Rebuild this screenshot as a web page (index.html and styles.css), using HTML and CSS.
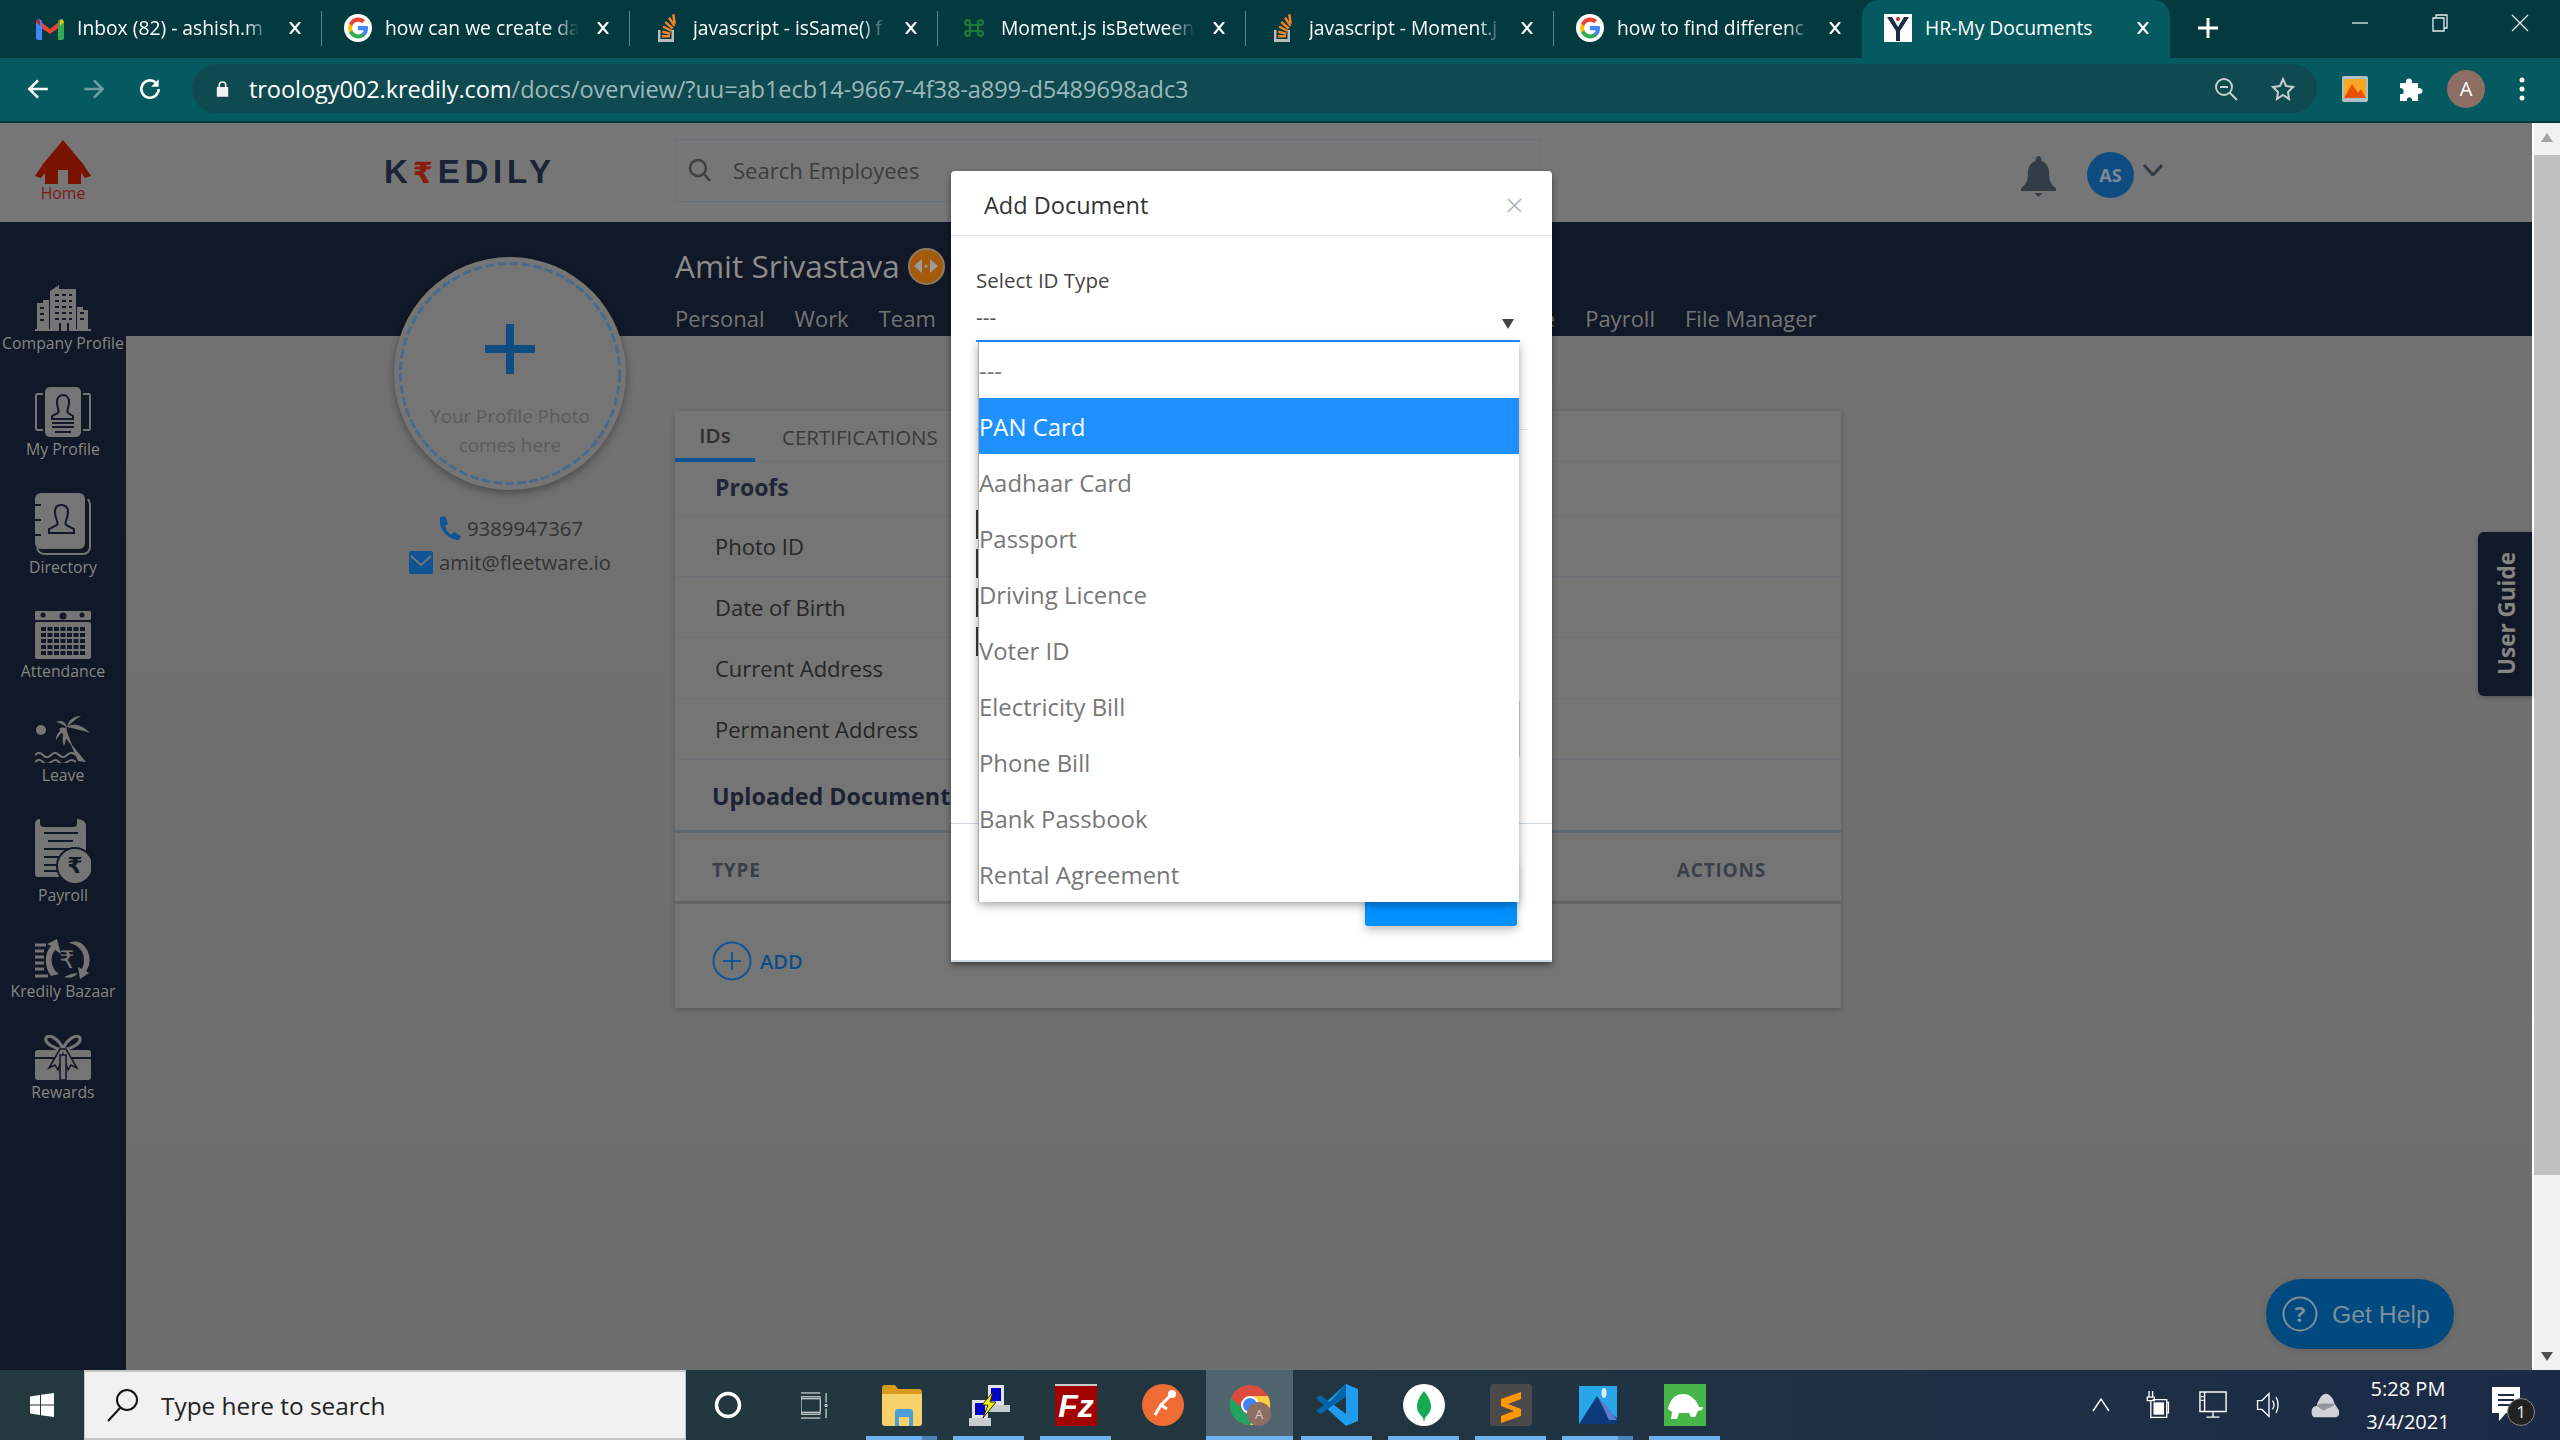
FILE: index.html
```html
<!DOCTYPE html>
<html lang="en">
<head>
<meta charset="utf-8">
<title>HR-My Documents</title>
<link rel="stylesheet" href="styles.css">
</head>
<body>
<header class="tabstrip">
  <div class="tab">
    <svg class="favicon" viewBox="0 0 28 28"><g transform="translate(0 4)"><path fill="#ea4335" d="M4 3 14 11 24 3 24 9 14 16 4 9Z"/><path fill="#4285f4" d="M0 5C0 1 3 0 5 2L6 3V22H2C1 22 0 21 0 20Z"/><path fill="#34a853" d="M28 5C28 1 25 0 23 2L22 3V22H26C27 22 28 21 28 20Z"/><path fill="#fbbc04" d="M24 3 26 1 28 4 24 8Z"/><path fill="#c5221f" d="M4 3 2 1 0 4 4 8Z"/></g></svg>
    <span class="tab-title">Inbox (82) - ashish.m</span><svg class="tab-x" viewBox="0 0 12 12"><path d="M1 0 11 12M11 0 1 12"/></svg>
  </div>
  <div class="tab">
    <svg class="favicon" viewBox="0 0 28 28"><use href="#google"/></svg>
    <span class="tab-title">how can we create da</span><svg class="tab-x" viewBox="0 0 12 12"><path d="M1 0 11 12M11 0 1 12"/></svg>
  </div>
  <div class="tab">
    <svg class="favicon" viewBox="0 0 28 28"><use href="#stack"/></svg>
    <span class="tab-title">javascript - isSame() f</span><svg class="tab-x" viewBox="0 0 12 12"><path d="M1 0 11 12M11 0 1 12"/></svg>
  </div>
  <div class="tab">
    <svg class="favicon" viewBox="0 0 28 28"><path fill="none" stroke="#1f7a35" stroke-width="2.200" d="M10 11H18V17H10ZM10 11H7A2.500 2.500 0 1 1 10 8ZM18 11H21A2.500 2.500 0 1 0 18 8ZM10 17H7A2.500 2.500 0 1 0 10 20ZM18 17H21A2.500 2.500 0 1 1 18 20Z"/></svg>
    <span class="tab-title">Moment.js isBetween</span><svg class="tab-x" viewBox="0 0 12 12"><path d="M1 0 11 12M11 0 1 12"/></svg>
  </div>
  <div class="tab">
    <svg class="favicon" viewBox="0 0 28 28"><use href="#stack"/></svg>
    <span class="tab-title">javascript - Moment.j</span><svg class="tab-x" viewBox="0 0 12 12"><path d="M1 0 11 12M11 0 1 12"/></svg>
  </div>
  <div class="tab tab-last">
    <svg class="favicon" viewBox="0 0 28 28"><use href="#google"/></svg>
    <span class="tab-title">how to find differenc</span><svg class="tab-x" viewBox="0 0 12 12"><path d="M1 0 11 12M11 0 1 12"/></svg>
  </div>
  <div class="tab tab-active">
    <svg class="favicon" viewBox="0 0 28 28"><rect width="28" height="28" fill="#fff"/><path fill="#1d2a44" d="M3 3H8L14 13L20 3H25L16 17V27H12V17Z"/><circle cx="14" cy="5" r="2" fill="#c62828"/></svg>
    <span class="tab-title tab-title-full">HR-My Documents</span><svg class="tab-x" viewBox="0 0 12 12"><path d="M1 0 11 12M11 0 1 12"/></svg>
  </div>
  <svg class="new-tab" viewBox="0 0 20 20"><path d="M10 0V20M0 10H20"/></svg>
  <div class="win-controls">
    <svg viewBox="0 0 20 20"><path d="M2 10H18"/></svg>
    <svg viewBox="0 0 20 20"><path d="M3 5H14V18H3ZM6 5V2H17V15H14"/></svg>
    <svg viewBox="0 0 20 20"><path d="M2 2 18 18M18 2 2 18"/></svg>
  </div>
</header>

<div class="toolbar">
  <svg class="tb-icon" viewBox="0 0 24 24"><path d="M21 12H4M12 4 4 12 12 20"/></svg>
  <svg class="tb-icon tb-dim" viewBox="0 0 24 24"><path d="M3 12H20M12 4 20 12 12 20"/></svg>
  <svg class="tb-icon" viewBox="0 0 24 24"><path d="M20 12A8 8 0 1 1 17.5 6.200"/><path class="solid" d="M20 3V10H13Z"/></svg>
  <div class="omnibox">
    <svg class="lock" viewBox="0 0 16 20"><path d="M3 8V6A5 5 0 0 1 13 6V8H15V20H1V8ZM5 8H11V6A3 3 0 0 0 5 6Z"/></svg>
    <span class="url"><span class="url-host">troology002.kredily.com</span>/docs/overview/?uu=ab1ecb14-9667-4f38-a899-d5489698adc3</span>
    <svg class="omni-icon" viewBox="0 0 24 24"><circle cx="10" cy="10" r="8"/><path d="M16 16 23 23M6 10H14"/></svg>
    <svg class="omni-icon" viewBox="0 0 24 24"><path d="M12 2 15 9 22 10 17 15 18 22 12 18 6 22 7 15 2 10 9 9Z"/></svg>
  </div>
  <div class="tb-right">
    <svg class="ext-photo" viewBox="0 0 26 26"><rect width="26" height="26" rx="2" fill="#b0bec5"/><rect x="2" y="3" width="22" height="19" fill="#f9a825"/><path fill="#e65100" d="M2 22 10 8 16 17 19 13 24 22Z"/></svg>
    <svg class="ext-puzzle" viewBox="0 0 26 26"><path d="M3 7H9C8 1 16 1 15 7H21V12C27 11 27 19 21 18V25H15C16 20 9 20 10 25H3V18C8 19 8 12 3 12Z"/></svg>
    <span class="tb-avatar">A</span>
    <svg class="tb-dots" viewBox="0 0 6 24"><circle cx="3" cy="3" r="2.500"/><circle cx="3" cy="12" r="2.500"/><circle cx="3" cy="21" r="2.500"/></svg>
  </div>
</div>

<div class="viewport">
  <div class="page">
    <div class="app-header">
      <div class="home">
        <svg class="home-icon" viewBox="0 0 56 44"><path d="M28 0 48 24 56 36 50 38 46 33V44H33V30H23V44H10V33L6 38 0 36 8 24Z"/></svg>
        <span>Home</span>
      </div>
      <div class="logo">K<span class="logo-r">₹</span>EDILY</div>
      <div class="search">
        <svg viewBox="0 0 24 24"><circle cx="10" cy="10" r="8"/><path d="M16 16 22 23"/></svg>
        <span>Search Employees</span>
      </div>
      <svg class="bell" viewBox="0 0 36 42"><path d="M18 0C20 0 21 2 21 5C27 7 29 12 29 19C29 27 32 30 36 33V36H0V33C4 30 7 27 7 19C7 12 9 7 15 5C15 2 16 0 18 0Z"/><path d="M14 38H22L18 42Z"/></svg>
      <span class="avatar">AS</span>
      <svg class="chev" viewBox="0 0 20 12"><path d="M1 1 10 11 19 1"/></svg>
    </div>
    <div class="page-body">
      <nav class="sidebar">
        <a class="side-item">
          <svg width="56" height="46" viewBox="0 0 56 46"><path d="M0 46V44H2V18H8V15H14V44H15V6L24 0V4H41V44H42V22H48V25H53V44H56V46Z"/><path class="cut" stroke-dasharray="4 3" d="M20 10H37M20 16H37M20 22H37M20 28H37M20 34H37M5 23H10M5 29H10M5 35H10M45 28H50M45 34H50"/><path class="cut" d="M25 38V46M33 38V46"/></svg>
          <span>Company Profile</span>
        </a>
        <a class="side-item">
          <svg width="56" height="50" viewBox="0 0 56 50"><path fill="none" stroke="#757575" stroke-width="2" d="M8 7H2C1 7 1 8 1 9V41C1 42 1 43 2 43H8M48 7H54C55 7 55 8 55 9V41C55 42 55 43 54 43H48"/><rect x="10" y="0" width="36" height="50" rx="5"/><path class="cut thin" d="M23 26C25 24 22 21 22 15C22 10 25 8 28 8C31 8 34 10 34 15C34 21 31 24 33 26L38 29V32H17V29Z"/><path class="cut" d="M17 36H39M17 40H39M20 45H36"/></svg>
          <span>My Profile</span>
        </a>
        <a class="side-item">
          <svg width="56" height="62" viewBox="0 0 56 62"><path fill="none" stroke="#757575" stroke-width="2" d="M53 6C54 8 55 9 55 12V54C55 58 52 61 48 61H10C6 61 3 59 2 55"/><rect x="0" y="0" width="50" height="56" rx="6"/><path class="cut" stroke-width="3" d="M0 12H6M0 27H6M0 42H6"/><path class="cut thin" d="M22 32C24 29 20 26 20 19C20 13 23 12 26 12C29 12 33 13 33 19C33 26 29 29 31 32L39 36V40H14V36Z"/></svg>
          <span>Directory</span>
        </a>
        <a class="side-item">
          <svg width="56" height="48" viewBox="0 0 56 48"><rect y="0" width="56" height="9" rx="1"/><rect y="11" width="56" height="37" rx="2"/><circle class="dark" cx="8" cy="4" r="2.500"/><circle class="dark" cx="28" cy="5" r="3.500"/><circle class="dark" cx="47" cy="4" r="2.500"/><path class="cut cut-cal" stroke-dasharray="5 1.500" d="M6 18H50M6 24H50M6 30H50M6 36H50M6 42H50"/></svg>
          <span>Attendance</span>
        </a>
        <a class="side-item">
          <svg width="56" height="48" viewBox="0 0 56 48"><circle cx="6" cy="15" r="5"/><path d="M26 14C28 12 31 12 33 14L39 30 53 47 45 46 38 30Z" transform="translate(-2 0)"/><path d="M32 12C30 6 26 5 21 7C26 8 28 10 32 12ZM32 12C34 5 38 1 46 1C40 4 37 8 32 12ZM32 12C38 8 46 9 55 18C47 15 40 14 32 12ZM32 12C26 14 21 18 21 25C24 20 28 16 32 12ZM32 12C31 18 32 24 29 31C27 25 27 18 32 12Z"/><path fill="none" stroke="#757575" stroke-width="2" d="M0 40C3 37 5 37 8 40S13 43 16 40 21 37 24 40 29 43 32 40 37 37 41 40M0 47C3 44 5 44 8 47S13 49 16 47 21 44 24 47 29 49 32 47 37 44 41 47"/></svg>
          <span>Leave</span>
        </a>
        <a class="side-item">
          <svg width="56" height="64" viewBox="0 0 56 64"><path d="M0 6C0 2 2 0 5 0V4C5 7 7 8 10 8H38C41 8 42 7 42 4V0C45 0 51 2 51 6V58H3C1 58 0 57 0 55Z"/><path class="cut" d="M9 14H43M13 22H38M9 30H40M9 38H30M9 46H30M9 52H26"/><circle cx="40" cy="47" r="18" stroke="#111827" stroke-width="2"/><text class="rupee" x="40" y="54" text-anchor="middle" font-size="22">₹</text></svg>
          <span>Payroll</span>
        </a>
        <a class="side-item">
          <svg width="56" height="40" viewBox="0 0 56 40"><path class="side-stroke" stroke-width="3" d="M0 6H11M0 12H9M0 18H9M0 24H9M0 30H9M0 37H13"/><path d="M22 0 26 15 20 11C14 18 16 30 24 35L16 37C9 28 9 14 16 7L12 5Z"/><path d="M36 35 29 38C34 40 40 38 43 34ZM34 4C40 1 47 3 50 8C56 15 56 26 51 32L54 34 45 40 43 28 47 30C50 24 50 14 44 9C41 6 38 5 34 4Z"/><text class="rupee light" x="32" y="29" text-anchor="middle" font-size="24">₹</text></svg>
          <span>Kredily Bazaar</span>
        </a>
        <a class="side-item">
          <svg width="56" height="45" viewBox="0 0 56 45"><path d="M0 17C0 16 1 15 3 15H53C55 15 56 16 56 17V22H0ZM0 24H56V42C56 44 55 45 53 45H3C1 45 0 44 0 42Z"/><path fill="none" stroke="#757575" stroke-width="3" d="M28 14C24 4 14 -2 11 3C9 8 20 14 28 15C36 14 47 8 45 3C42 -2 32 4 28 14Z"/><path stroke="#111827" stroke-width="1.500" d="M25 14 14 33 20 30 23 35 28 19 33 35 36 30 42 33 31 14Z"/><path stroke="#111827" stroke-width="1.500" d="M25 20H31V45H25Z"/></svg>
          <span>Rewards</span>
        </a>
      </nav>
      <main class="main">
        <div class="band">
          <div class="name-row">
            <h1>Amit Srivastava</h1>
            <span class="badge"><svg viewBox="0 0 24 14"><path d="M0 7 8 0V14ZM24 7 16 0V14Z"/><circle cx="12" cy="7" r="1.500"/></svg></span>
          </div>
          <div class="band-nav">
            <a>Personal</a><a>Work</a><a>Team</a><a class="nav-leave">Leave</a><a>Payroll</a><a>File Manager</a>
          </div>
        </div>
        <div class="content">
          <aside class="profile">
            <div class="photo">
              <svg class="photo-dash" viewBox="0 0 222 223"><ellipse cx="111" cy="111.500" rx="109.500" ry="110"/></svg>
              <div class="photo-ring">
                <svg class="plus" viewBox="0 0 50 50"><path d="M21 0H29V21H50V29H29V50H21V29H0V21H21Z"/></svg>
                <p>Your Profile Photo<br>comes here</p>
              </div>
            </div>
            <div class="contact contact-first">
              <svg width="24" height="24" viewBox="0 0 24 24"><path class="blue" d="M3 1 8 0 11 8 8 10C9 14 11 17 14 19L17 16 24 20 22 24C12 24 1 14 3 1Z"/></svg>
              <span>9389947367</span>
            </div>
            <div class="contact">
              <svg width="24" height="24" viewBox="0 0 24 24"><rect class="blue" y="1" width="24" height="23" rx="2"/><path fill="none" stroke="#757575" stroke-width="2" d="M2 6 12 15 22 6"/></svg>
              <span>amit@fleetware.io</span>
            </div>
          </aside>
          <section class="card">
            <div class="card-tabs">
              <a class="card-tab card-tab-on">IDs</a><a class="card-tab">CERTIFICATIONS</a>
            </div>
            <div class="row row-head">Proofs</div>
            <div class="row">Photo ID</div>
            <div class="row">Date of Birth</div>
            <div class="row">Current Address</div>
            <div class="row">Permanent Address</div>
            <div class="row-upload">Uploaded Documents</div>
            <div class="table-head"><span>TYPE</span><span>ACTIONS</span></div>
            <div class="add-row">
              <svg viewBox="0 0 40 40"><circle cx="20" cy="20" r="18.500"/><path d="M20 11V29M11 20H29"/></svg>
              <span>ADD</span>
            </div>
          </section>
        </div>
      </main>
    </div>
  </div>
  <div class="scrollbar">
    <span class="arrow-up"></span>
    <div class="thumb"></div>
    <span class="arrow-down"></span>
  </div>
</div>

<footer class="taskbar">
  <div class="start"><svg viewBox="0 0 24 24"><path d="M0 3.500 10 2V11.500H0ZM11 1.800 24 0V11.500H11ZM0 12.500H10V22L0 20.500ZM11 12.500H24V24L11 22.200Z"/></svg></div>
  <div class="task-search">
    <svg viewBox="0 0 32 34"><circle cx="20" cy="12" r="10"/><path d="M13 20 1 33"/></svg>
    <span>Type here to search</span>
  </div>
  <div class="task-slot slot-cortana"><svg class="i-cortana" viewBox="0 0 28 28"><circle cx="14" cy="14" r="11.500"/></svg></div>
  <div class="task-slot slot-view"><svg class="i-view" viewBox="0 0 28 28"><path d="M0 1H20M0 27H20M0 6V5H20V6M0 7H20V21H0ZM0 22V23H20V22M26 1V11M26 17V27M25 13H27V15H25Z"/></svg></div>
  <div class="task-slot on split">
    <svg viewBox="0 0 42 42"><path fill="#d99a1d" d="M1 4C1 2 2 1 4 1H14L17 5H38C40 5 41 6 41 8V40H1Z"/><path fill="#f7d26b" d="M1 10H41V39C41 41 40 42 38 42H4C2 42 1 41 1 39Z"/><path fill="#4a9fd8" d="M14 28C14 26 15 25 17 25H29C31 25 32 26 32 28V42H28V33H18V42H14Z"/></svg>
  </div>
  <div class="task-slot on">
    <svg viewBox="0 0 42 42"><rect x="20" y="1" width="16" height="20" fill="#dfe3e6"/><rect x="23" y="4" width="10" height="13" fill="#0000c8"/><rect x="20" y="21" width="22" height="7" fill="#c7ccd0"/><rect x="4" y="16" width="16" height="19" fill="#dfe3e6"/><rect x="7" y="19" width="10" height="12" fill="#0000c8"/><rect x="1" y="34" width="22" height="8" fill="#c7ccd0"/><path fill="#f5f200" stroke="#222" d="M25 8 14 21 20 21 15 34 28 18 22 18Z"/></svg>
  </div>
  <div class="task-slot on">
    <svg viewBox="0 0 42 42"><rect width="42" height="42" fill="#a30000"/><path fill="#c9c9c9" d="M0 0H42V2H0Z"/><text class="fz" x="21" y="33" text-anchor="middle">Fz</text></svg>
  </div>
  <div class="task-slot">
    <svg viewBox="0 0 42 42"><circle cx="21" cy="21" r="21" fill="#ef6c35"/><path fill="none" stroke="#fff" stroke-width="3" d="M31 9 19 21 13 31M19 21 25 25"/><circle cx="30" cy="10" r="4" fill="#fff"/></svg>
  </div>
  <div class="task-slot active on">
    <svg viewBox="0 0 42 42"><circle cx="21" cy="21" r="20" fill="#dd4b3e"/><path fill="#1ea362" d="M2 14A20 20 0 0 0 21 41L30 25 21 30C16 30 13 27 12 23Z"/><path fill="#ffce44" d="M21 12H39A20 20 0 0 1 21 41L30 25C31 20 27 13 21 12Z"/><circle cx="21" cy="21" r="9" fill="#fff"/><circle cx="21" cy="21" r="7" fill="#4285f4"/><circle cx="30" cy="30" r="12" fill="#8d6e63"/><text class="chrome-a" x="30" y="35" text-anchor="middle">A</text></svg>
  </div>
  <div class="task-slot on">
    <svg viewBox="0 0 42 42"><path fill="#1f9cf0" d="M30 0 42 5V37L30 42 8 22 14 18 30 30V12L14 24 8 20Z"/><path fill="#0065a9" d="M30 12 5 30 0 27 8 21 0 14 4 11 14 18 30 0Z"/></svg>
  </div>
  <div class="task-slot on">
    <svg viewBox="0 0 42 42"><circle cx="21" cy="21" r="21" fill="#fff"/><path fill="#13aa52" d="M21 7C26 13 28 18 28 23C28 28 24 31 22 34L21 38 20 34C18 31 14 28 14 23C14 18 16 13 21 7Z"/></svg>
  </div>
  <div class="task-slot on">
    <svg viewBox="0 0 42 42"><rect width="42" height="42" rx="3" fill="#4a4a4a"/><path fill="#ff9800" d="M31 8V15L18 20 31 25V32L11 39V32L24 27 11 22V15Z"/></svg>
  </div>
  <div class="task-slot on split">
    <svg viewBox="0 0 42 42"><rect x="2" y="2" width="38" height="38" fill="#29a6e8"/><path fill="#0d3a7a" d="M2 40 20 12 30 26 40 34V40Z"/><path fill="#5a7bd0" d="M22 15 30 22 40 36H32Z"/><ellipse cx="27" cy="9" rx="2.500" ry="5" fill="#dbeffa"/></svg>
  </div>
  <div class="task-slot on">
    <svg viewBox="0 0 42 42"><rect width="42" height="42" fill="#46b648"/><path fill="#fff" d="M4 25C6 14 13 9 20 10C28 11 33 17 35 23H39L38 26 34 27 31 33H27L25 29H15L13 35 7 35 8 28Z"/></svg>
  </div>
  <div class="tray">
    <div class="tray-item"><svg class="tray-line" viewBox="0 0 18 18"><path d="M1 15 9 3 17 15"/></svg></div>
    <div class="tray-item"><svg class="tray-line tray-lg" viewBox="0 0 26 34"><path d="M4 1V8M8 1V8M2 8H10V12H2ZM6 12V32M8 11H24V31H6M24 14H26V26H24"/><path class="tray-fill" d="M9 14H21V28H9Z"/></svg></div>
    <div class="tray-item"><svg class="tray-line tray-lg" viewBox="0 0 30 30"><path d="M1 1H29V22H1ZM15 22V28M8 28H22M6 1V22M2 6H5M2 10H5"/></svg></div>
    <div class="tray-item"><svg class="tray-line tray-lg" viewBox="0 0 28 34"><path d="M1 12H6L14 4V30L6 22H1ZM18 12C20 15 20 19 18 22M22 8C25 13 25 21 22 26"/></svg></div>
    <div class="tray-item"><svg class="tray-lg" viewBox="0 0 30 28"><path fill="#cfd3d8" d="M3 27C-1 24 0 15 6 15C8 8 12 2 16 2C20 2 24 7 25 12L30 20C31 24 29 27 26 27Z"/><path fill="#8e949c" d="M6 15C10 10 20 14 25 12C26 16 18 16 14 20C10 18 8 16 6 15Z"/></svg></div>
    <div class="clock"><span>5:28 PM</span><span>3/4/2021</span></div>
    <div class="notif">
      <svg viewBox="0 0 28 36"><path fill="#fff" d="M0 0H28V26H14L7 34V26H0Z"/><path stroke="#1c2a47" stroke-width="2" d="M6 8H22M6 13H22M6 18H18"/></svg>
      <span>1</span>
    </div>
  </div>
</footer>

<div class="modal">
  <div class="modal-head">
    <h2>Add Document</h2>
    <svg viewBox="0 0 16 16"><path d="M1 1 15 15M15 1 1 15"/></svg>
  </div>
  <div class="modal-body">
    <label class="field-label">Select ID Type</label>
    <div class="select"><span>---</span><i class="select-arrow"></i></div>
    <div class="hidden-rule"></div>
    <div class="edges"><i></i><i></i><i></i><i></i></div>
    <div class="hidden-box"></div>
    <div class="modal-foot"><button class="submit" type="button"></button></div>
  </div>
</div>
<ul class="dropdown">
  <li>---</li>
  <li class="selected">PAN Card</li>
  <li>Aadhaar Card</li>
  <li>Passport</li>
  <li>Driving Licence</li>
  <li>Voter ID</li>
  <li>Electricity Bill</li>
  <li>Phone Bill</li>
  <li>Bank Passbook</li>
  <li>Rental Agreement</li>
</ul>

<a class="user-guide">User Guide</a>
<a class="get-help">
  <svg viewBox="0 0 36 36"><circle cx="18" cy="18" r="16.500"/><text x="18" y="26" text-anchor="middle">?</text></svg>
  <span>Get Help</span>
</a>

<svg class="defs" width="0" height="0">
  <defs>
    <g id="google">
      <circle cx="14" cy="14" r="14" fill="#fff"/>
      <path fill="#4285f4" d="M24 14.300c0-.8-.1-1.500-.2-2.200H14v4.200h5.600c-.3 1.300-1 2.400-2.100 3.100v2.600h3.400c2-1.800 3.100-4.500 3.100-7.700z"/>
      <path fill="#34a853" d="M14 24.500c2.800 0 5.200-.9 6.900-2.500l-3.400-2.600c-.9.600-2.100 1-3.500 1-2.700 0-5-1.800-5.800-4.300H5.200v2.700c1.700 3.400 5.100 5.700 8.800 5.700z"/>
      <path fill="#fbbc05" d="M8.200 16.100c-.4-1.300-.4-2.700 0-4V9.400H5.200c-1.500 2.800-1.500 6.300 0 9.400z"/>
      <path fill="#ea4335" d="M14 7.800c1.500 0 2.900.5 4 1.500l3-3C19.200 4.500 16.700 3.500 14 3.500c-3.700 0-7.100 2.300-8.800 5.900l3 2.700C9 9.600 11.300 7.800 14 7.800z"/>
    </g>
    <g id="stack">
      <path fill="#bcbbbb" d="M6 16H8.500V25H19.500V16H22V28H6Z"/>
      <path fill="#f48024" d="M10 21H18V23.500H10ZM10.500 16.500 18.500 18.500 18 21 10 19ZM11.500 11.500 20 16 19 18 10.500 13.500ZM14 7 21.500 13.500 20 15.500 12.500 9ZM18 3 23.500 11 21.500 12.500 16 4.500ZM22.500 0 24 9.500 21.500 10 20 .5Z"/>
    </g>
  </defs>
</svg>
</body>
</html>
```

FILE: styles.css
```css
* { box-sizing: border-box; }
html, body { margin: 0; padding: 0; }
body {
  width: 2560px;
  height: 1440px;
  overflow: hidden;
  position: relative;
  display: flex;
  flex-direction: column;
  font-family: "Open Sans", "Liberation Sans", sans-serif;
  background: #707070;
}
p, h1, h2, ul { margin: 0; padding: 0; }
.defs { position: absolute; }

/* Browser tab strip */
.tabstrip {
  height: 58px;
  flex: none;
  display: flex;
  align-items: stretch;
  padding-left: 14px;
  background: #033a40;
  position: relative;
}
.tab {
  width: 308px;
  height: 58px;
  flex: none;
  display: flex;
  align-items: center;
  padding: 0 0 3px 22px;
  color: #fff;
  font-size: 19.300px;
  position: relative;
}
.tab::after {
  content: "";
  position: absolute;
  right: 0;
  top: 11px;
  height: 35px;
  width: 1px;
  background: #5f8488;
}
.tab-last::after, .tab-active::after { display: none; }
.tab-active {
  background: #055a60;
  border-radius: 16px 16px 0 0;
}
.favicon { width: 28px; height: 28px; flex: none; margin-right: 13px; }
.tab-title {
  width: 200px;
  white-space: nowrap;
  flex: none;
  -webkit-mask-image: linear-gradient(to right, #000 84%, transparent 97%);
  mask-image: linear-gradient(to right, #000 84%, transparent 97%);
}
.tab-title-full { -webkit-mask-image: none; mask-image: none; }
.tab-x { width: 12px; height: 12px; margin-left: 12px; flex: none; fill: none; stroke: #fff; stroke-width: 2.200; }
.new-tab { width: 20px; height: 20px; margin: 18px 0 0 28px; fill: none; stroke: #fff; stroke-width: 3; }
.win-controls { margin-left: auto; display: flex; align-items: flex-start; }
.win-controls svg { width: 20px; height: 20px; margin: 13px 30px 0 30px; fill: none; stroke: #e8eeee; stroke-width: 1.300; }

/* Browser toolbar */
.toolbar {
  height: 65px;
  flex: none;
  display: flex;
  align-items: center;
  padding: 7px 0 9px 25px;
  background: #055a60;
  border-bottom: 2px solid #033a40;
}
.tb-icon { width: 26px; height: 26px; flex: none; margin-right: 30px; fill: none; stroke: #fff; stroke-width: 2.400; }
.tb-icon .solid { fill: #fff; stroke: none; }
.tb-dim { stroke: #6f9da1; }
.omnibox {
  margin-left: -1px;
  width: 2125px;
  height: 49px;
  flex: none;
  display: flex;
  align-items: center;
  padding: 0 0 0 24px;
  background: #0f4a50;
  border-radius: 25px;
  color: #9bb8bb;
}
.lock { width: 13px; height: 17px; fill: #f2f2f2; flex: none; margin-right: 20px; }
.url { font-size: 23.600px; letter-spacing: -.1px; white-space: nowrap; width: 1965px; flex: none; }
.url-host { color: #fff; }
.omni-icon { width: 24px; height: 24px; flex: none; fill: none; stroke: #c4cfd0; stroke-width: 2; margin-right: 33px; }
.tb-right { display: flex; align-items: center; margin-left: 25px; }
.ext-photo { width: 26px; height: 26px; }
.ext-puzzle { width: 26px; height: 26px; fill: #fff; margin-left: 29px; }
.tb-avatar {
  width: 38px; height: 38px; border-radius: 50%;
  background: #8d6e63; color: #fff;
  display: flex; align-items: center; justify-content: center;
  font-size: 20px; margin-left: 24px;
}
.tb-dots { width: 6px; height: 24px; fill: #fff; margin-left: 34px; }

/* Viewport */
.viewport { flex: 1; min-height: 0; display: flex; }
.page { width: 2532px; flex: none; display: flex; flex-direction: column; background: linear-gradient(#727272, #6e6e6e); }
.scrollbar {
  width: 28px;
  flex: none;
  display: flex;
  flex-direction: column;
  align-items: center;
  background: #f1f1f1;
  border-left: 2px solid #fff;
}
.arrow-up { margin-top: 10px; border: 6px solid transparent; border-top: 0; border-bottom: 9px solid #a3a3a3; }
.thumb { width: 26px; height: 1020px; margin-top: 13px; background: #c1c1c1; }
.arrow-down { margin-top: auto; margin-bottom: 9px; border: 6px solid transparent; border-bottom: 0; border-top: 9px solid #505050; }

/* App header */
.app-header {
  height: 99px;
  flex: none;
  display: flex;
  align-items: flex-start;
  background: #767676;
}
.home {
  width: 126px;
  flex: none;
  display: flex;
  flex-direction: column;
  align-items: center;
  padding-top: 17px;
  color: #7d1a1e;
  font-size: 15.800px;
  line-height: 20px;
}
.home-icon { width: 56px; height: 44px; fill: #7a1200; display: block; margin-bottom: -1px; }
.logo {
  width: 549px;
  flex: none;
  padding: 29px 0 0 258px;
  font-family: "Liberation Sans", sans-serif;
  font-weight: 700;
  font-size: 33px;
  line-height: 40px;
  letter-spacing: 4.800px;
  color: #1b2338;
}
.logo-r { color: #8a1c0a; font-family: "DejaVu Sans", sans-serif; font-size: 29px; }
.search {
  width: 866px;
  height: 63px;
  flex: none;
  margin-top: 16px;
  display: flex;
  align-items: center;
  padding: 0 0 2px 12px;
  border: 1px solid #66717a;
  color: #3c3c3c;
  font-size: 22px;
}
.search svg { width: 24px; height: 24px; fill: none; stroke: #3f3f3f; stroke-width: 2.400; margin-right: 21px; }
.bell { width: 35px; height: 41px; fill: #333d48; margin: 33px 0 0 480px; flex: none; }
.avatar {
  width: 47px; height: 46px; flex: none; border-radius: 50%;
  margin: 29px 0 0 31px;
  background: #0f4c81; color: #7d8a95;
  display: flex; align-items: center; justify-content: center;
  font-size: 18px; font-weight: 700;
}
.chev { width: 20px; height: 12px; flex: none; margin: 41px 0 0 9px; fill: none; stroke: #333d48; stroke-width: 3; }

/* Body */
.page-body { flex: 1; min-height: 0; display: flex; }
.sidebar {
  width: 126px;
  flex: none;
  display: flex;
  flex-direction: column;
  align-items: center;
  gap: 34px;
  padding-top: 63px;
  background: #111827;
}
.side-item {
  display: flex;
  flex-direction: column;
  align-items: center;
  color: #868686;
  font-size: 15.800px;
  line-height: 20px;
  white-space: nowrap;
}
.side-item svg { display: block; margin-bottom: 2px; fill: #757575; }
.cut { fill: none; stroke: #111827; stroke-width: 2; }
.cut.thin { stroke-width: 2; }
.cut-cal { stroke-width: 4; }
.dark { fill: #111827; }
.side-stroke { fill: none; stroke: #757575; }
.rupee { fill: #111827; font-family: "DejaVu Sans", sans-serif; font-weight: 700; }
.rupee.light { fill: #757575; font-weight: 400; }

.main { flex: 1; min-width: 0; display: flex; flex-direction: column; }
.band {
  height: 114px;
  flex: none;
  padding: 19px 0 0 549px;
  background: #111827;
}
.name-row { display: flex; align-items: center; height: 50px; }
.name-row h1 { font-size: 31.500px; font-weight: 400; color: #8c8c8c; margin-right: 8px; line-height: 50px; }
.badge {
  width: 37px; height: 37px; border-radius: 50%;
  background: #a45a0a;
  border: 2px solid #8c7a60;
  display: flex; align-items: center; justify-content: center;
}
.badge svg { width: 24px; height: 14px; fill: #9b9b9b; }
.band-nav { display: flex; gap: 30px; margin-top: 12px; color: #757575; font-size: 22px; line-height: 30px; white-space: nowrap; }
.nav-leave { margin-left: 530px; }

.content { flex: 1; display: flex; padding-top: 75px; min-height: 0; }
.profile {
  width: 280px;
  flex: none;
  margin: -154px 0 0 244px;
  position: relative;
  display: flex;
  flex-direction: column;
  align-items: center;
}
.photo {
  width: 232px;
  height: 233px;
  flex: none;
  padding: 5px;
  border-radius: 50%;
  background: #757575;
  box-shadow: 0 3px 8px rgba(0, 0, 0, .35);
  position: relative;
}
.photo-dash {
  position: absolute;
  left: 5px;
  top: 5px;
  width: 222px;
  height: 223px;
  fill: none;
  stroke: #4a6a8c;
  stroke-width: 3;
  stroke-dasharray: 9 3;
}
.photo-ring {
  height: 100%;
  display: flex;
  flex-direction: column;
  align-items: center;
  padding-top: 62px;
}
.plus { width: 50px; height: 50px; fill: #0f4c81; flex: none; }
.photo-ring p { margin-top: 28px; text-align: center; color: #5c5c5c; font-size: 18.800px; line-height: 29px; }
.contact { height: 34px; display: flex; align-items: center; gap: 6px; color: #333; font-size: 20.300px; white-space: nowrap; }
.contact-first { margin-top: 21px; }
.blue { fill: #0f5596; }

.card {
  width: 1166px;
  height: 597px;
  flex: none;
  margin-left: 25px;
  background: #757575;
  box-shadow: 0 2px 6px rgba(0, 0, 0, .2);
  display: flex;
  flex-direction: column;
}
.card-tabs { height: 51px; flex: none; display: flex; border-bottom: 1px solid #6c7075; font-size: 20.500px; }
.card-tab { display: flex; align-items: center; color: #333; padding: 0 24px; height: 51px; }
.card-tab-on { width: 80px; font-weight: 600; justify-content: center; padding: 0; border-bottom: 4px solid #0f5596; color: #2d2d2d; }
.card-tab:last-child { padding-left: 27px; color: #3a3a3a; }
.row {
  height: 61px;
  flex: none;
  display: flex;
  align-items: center;
  padding-left: 40px;
  border-bottom: 1px solid #6a7178;
  color: #262626;
  font-size: 22px;
}
.row-head { height: 54px; padding-bottom: 3px; color: #1f2637; font-weight: 700; font-size: 23px; }
.row-upload {
  height: 73px;
  flex: none;
  display: flex;
  align-items: center;
  padding: 2px 0 0 37px;
  border-bottom: 3px solid #60686f;
  color: #1c2233;
  font-weight: 700;
  font-size: 23.300px;
  white-space: nowrap;
}
.table-head {
  height: 71px;
  flex: none;
  display: flex;
  align-items: center;
  justify-content: space-between;
  padding: 5px 75px 0 37px;
  border-bottom: 3px solid #646464;
  color: #3b3f4a;
  font-weight: 700;
  font-size: 19px;
  letter-spacing: .8px;
}
.add-row { display: flex; align-items: center; padding: 37px 0 0 37px; gap: 8px; color: #0a4f87; font-size: 20px; font-weight: 600; }
.add-row svg { width: 40px; height: 40px; fill: none; stroke: #0f5596; stroke-width: 2; }

/* Taskbar */
.taskbar {
  height: 70px;
  flex: none;
  display: flex;
  align-items: stretch;
  background: linear-gradient(to right, #24383f 0%, #223640 50%, #1c2a47 100%);
}
.start { width: 84px; flex: none; display: flex; align-items: center; justify-content: center; }
.start svg { width: 24px; height: 24px; fill: #fff; margin-left: -1px; }
.task-search {
  width: 602px;
  flex: none;
  display: flex;
  align-items: center;
  padding-left: 22px;
  background: #f1f1f1;
  border: solid #c4c4c4;
  border-width: 2px 1px;
  color: #222;
  font-size: 24.400px;
}
.task-search svg { width: 32px; height: 34px; margin-right: 22px; fill: none; stroke: #111; stroke-width: 2; }
.task-slot {
  width: 87px;
  flex: none;
  display: flex;
  align-items: center;
  justify-content: center;
  position: relative;
}
.slot-cortana { width: 84px; }
.slot-view { width: 88px; }
.task-slot > svg { width: 42px; height: 42px; }
.task-slot.on::after {
  content: "";
  position: absolute;
  left: 8px;
  right: 8px;
  bottom: 0;
  height: 4px;
  background: #6cb0ee;
}
.task-slot.split::after {
  background: linear-gradient(to right, #6cb0ee 79%, #4a83b8 79%);
}
.task-slot.active { background: #4f646e; }
.task-slot.active::after { left: 0; right: 0; }
.i-cortana { fill: none; stroke: #fff; stroke-width: 3.500; }
.i-view { fill: none; stroke: #fff; stroke-width: 1; }
.task-slot .i-cortana { width: 28px; height: 28px; }
.task-slot .i-view { width: 27px; height: 27px; }
.fz { fill: #fff; font-family: "Liberation Sans", sans-serif; font-weight: 700; font-style: italic; font-size: 32px; }
.chrome-a { fill: #d7ccc8; font-family: "Open Sans", sans-serif; font-size: 13px; }
.tray { margin-left: auto; display: flex; align-items: center; }
.tray-item { width: 56px; display: flex; justify-content: center; }
.tray-line { width: 18px; height: 18px; fill: none; stroke: #fff; stroke-width: 1.500; }
.tray-lg { width: 28px; height: 30px; }
.tray-fill { fill: #fff; stroke: none; }
.clock {
  width: 110px;
  display: flex;
  flex-direction: column;
  align-items: center;
  gap: 9px;
  color: #fff;
  font-size: 20px;
  line-height: 24px;
}
.notif { width: 85px; margin-right: 12px; position: relative; display: flex; justify-content: center; }
.notif svg { width: 28px; height: 36px; }
.notif span {
  position: absolute;
  left: 44px;
  top: 11px;
  width: 28px;
  height: 28px;
  border-radius: 50%;
  background: #222;
  border: 1px solid #888;
  color: #e8e8e8;
  font-size: 17px;
  line-height: 26px;
  text-align: center;
}

/* Modal */
.modal {
  position: absolute;
  left: 951px;
  top: 171px;
  width: 601px;
  height: 791px;
  background: #fff;
  border-bottom: 2px solid #d0d8e0;
  border-radius: 4px 4px 0 0;
  box-shadow: 0 3px 6px rgba(0, 0, 0, .45);
}
.modal-head {
  height: 65px;
  display: flex;
  align-items: center;
  justify-content: space-between;
  padding: 3px 30px 0 33px;
  border-bottom: 1px solid #dde4ea;
}
.modal-head h2 { font-size: 23.500px; font-weight: 500; color: #333; }
.modal-head svg { width: 15px; height: 15px; fill: none; stroke: #a3aebb; stroke-width: 1.500; margin-top: 1px; }
.modal-body { padding-left: 25px; }
.field-label { display: block; margin-top: 31px; height: 26px; font-size: 20.500px; font-weight: 500; line-height: 26px; color: #444; }
.select {
  width: 544px;
  height: 49px;
  display: flex;
  justify-content: space-between;
  align-items: flex-start;
  padding: 11px 6px 0 0;
  border-bottom: 2px solid #1e90ff;
  font-size: 21px;
  line-height: 26px;
  color: #555;
}
.select-arrow { margin-top: 15px; border: 6.500px solid transparent; border-bottom: 0; border-top: 10px solid #444; }
.hidden-rule { width: 551px; height: 1px; margin-top: 87px; background: #dde4ea; }
.edges { margin-top: 80px; display: flex; flex-direction: column; gap: 10px; }
.edges i { display: block; width: 3px; height: 29px; background: #3a3a3a; }
.hidden-box { width: 544px; height: 56px; margin-top: 45px; border-right: 1px solid #c9d2da; }
.modal-foot {
  margin: 66px 0 0 -25px;
  border-top: 1px solid #d0d8e0;
  padding: 37px 35px 0 0;
  display: flex;
  justify-content: flex-end;
}
.submit {
  width: 152px;
  height: 65px;
  padding: 0;
  border: 0;
  border-radius: 0 0 3px 3px;
  background: #0091ff;
  box-shadow: 0 4px 8px rgba(0, 0, 0, .25);
}
.dropdown {
  position: absolute;
  left: 978px;
  top: 342px;
  width: 541px;
  list-style: none;
  background: #fff;
  border-left: 1px solid #a8a8a8;
  box-shadow: 0 3px 9px rgba(0, 0, 0, .35);
  font-size: 23.900px;
  line-height: 58px;
  color: #777;
}
.dropdown li { height: 56px; padding-left: 0; white-space: nowrap; }
.dropdown .selected { background: #1e90ff; color: #fff; }

/* Floating helpers */
.user-guide {
  position: absolute;
  left: 2478px;
  top: 532px;
  width: 54px;
  height: 164px;
  padding-left: 2px;
  display: flex;
  align-items: center;
  justify-content: center;
  background: #111827;
  border-radius: 6px 0 0 6px;
  color: #858585;
  font-weight: 700;
  font-size: 22.500px;
  writing-mode: sideways-lr;
  box-shadow: 0 2px 5px rgba(0, 0, 0, .25);
}
.get-help {
  position: absolute;
  left: 2266px;
  top: 1279px;
  width: 188px;
  height: 70px;
  display: flex;
  align-items: center;
  padding-left: 16px;
  gap: 14px;
  border-radius: 35px;
  background: #004a80;
  color: #7e8d98;
  font-family: "Liberation Sans", sans-serif;
  font-size: 24.800px;
  box-shadow: 0 1px 8px rgba(0, 0, 0, .15);
}
.get-help span { padding-top: 2px; }
.get-help svg { width: 36px; height: 36px; fill: none; stroke: #7e8d98; stroke-width: 2; flex: none; }
.get-help text { fill: #7e8d98; stroke: none; font-family: "Open Sans", sans-serif; font-weight: 700; font-size: 22px; }
```
